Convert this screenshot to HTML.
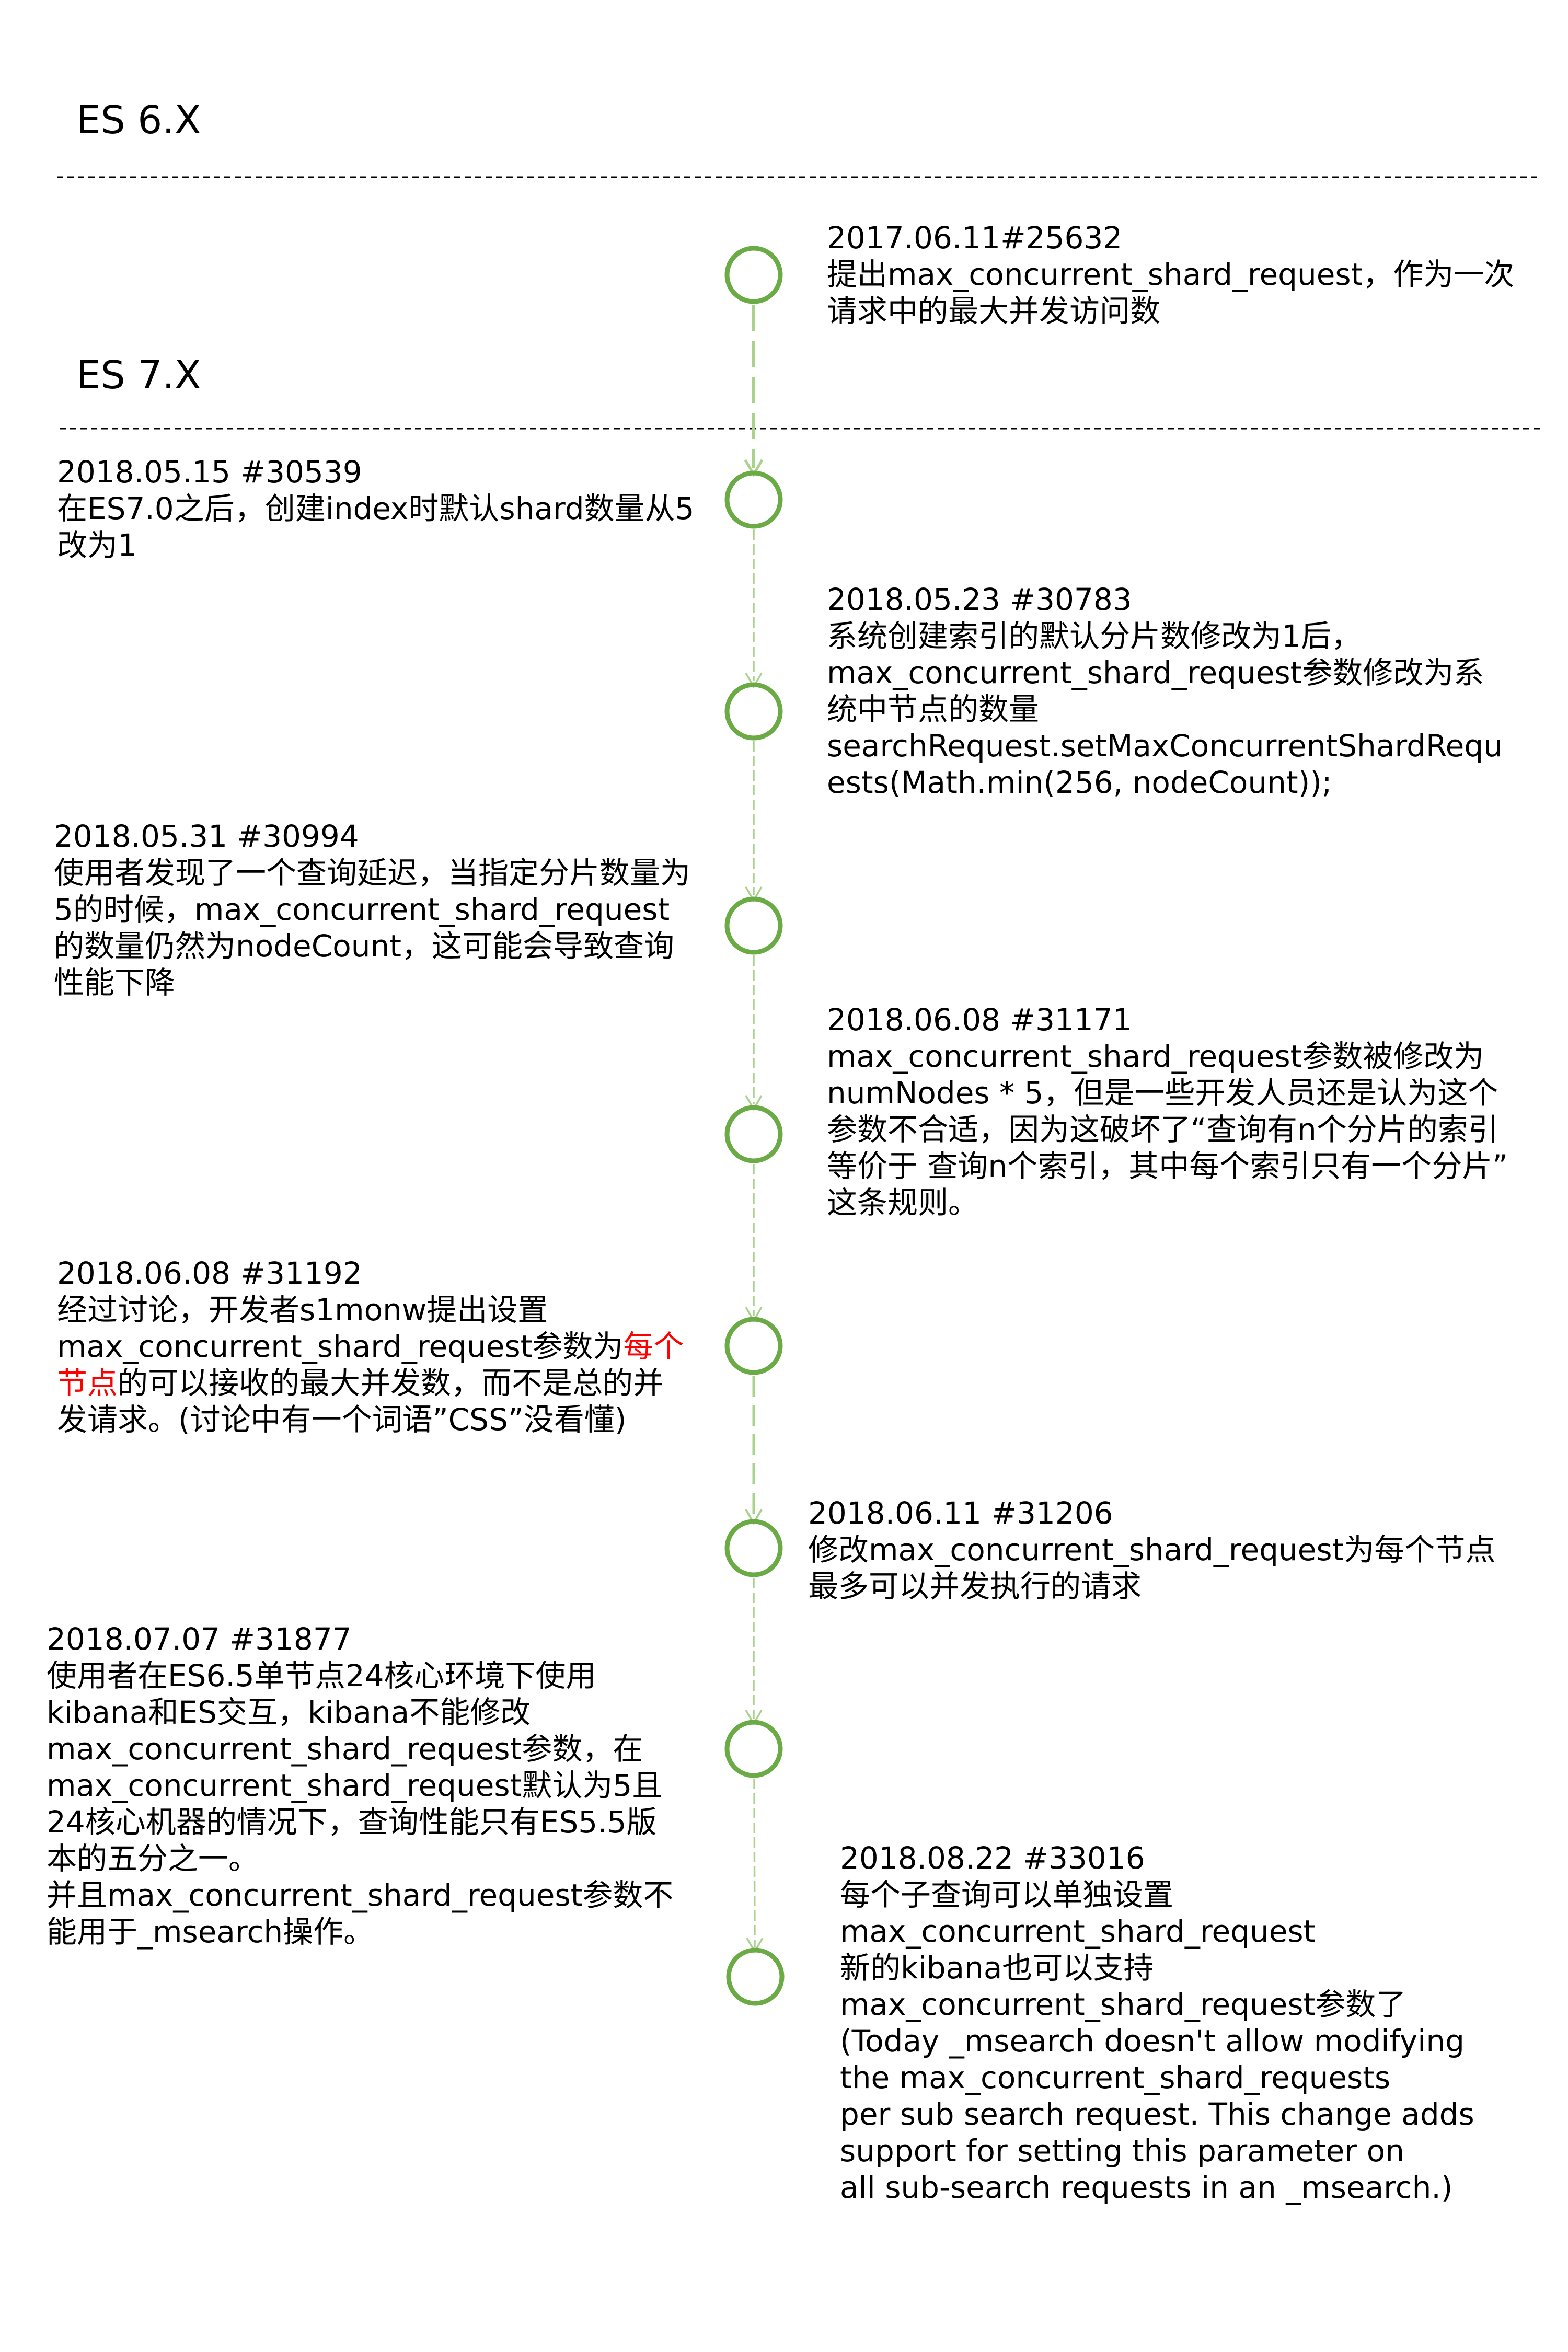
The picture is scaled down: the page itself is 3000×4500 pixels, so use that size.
<!DOCTYPE html>
<html><head><meta charset="utf-8"><style>
html,body{margin:0;padding:0;background:#fff;}
body{width:3000px;height:4500px;position:relative;overflow:hidden;font-family:"DejaVu Sans","Noto Sans CJK SC",sans-serif;color:#000;}
.t{position:absolute;font-size:58px;line-height:70px;white-space:pre;}
.h{position:absolute;font-size:74px;line-height:74px;white-space:pre;}
.r{color:#ff0000;}
svg{position:absolute;left:0;top:0;}
</style></head><body>
<svg width="3000" height="4500">
<line x1="109" y1="339" x2="2942" y2="339" stroke="#000" stroke-width="3" stroke-dasharray="12 8"/>
<line x1="114" y1="820" x2="2952" y2="820" stroke="#000" stroke-width="3" stroke-dasharray="12 8"/>
<g transform="translate(0,3)">
<g stroke="#a9d38c" fill="none">
<line x1="1442" y1="580" x2="1442" y2="893" stroke-width="6" stroke-dasharray="50 19"/>
<polyline points="1426,877 1442,905 1458,877" stroke-width="5"/>
<line x1="1442" y1="1010" x2="1442" y2="1300" stroke-width="3.5" stroke-dasharray="20 8"/>
<polyline points="1427,1285 1442,1311 1457,1285" stroke-width="3.5"/>
<line x1="1442" y1="1415" x2="1442" y2="1710" stroke-width="3.5" stroke-dasharray="20 8"/>
<polyline points="1427,1694 1442,1720 1457,1694" stroke-width="3.5"/>
<line x1="1442" y1="1825" x2="1442" y2="2110" stroke-width="3.5" stroke-dasharray="20 8"/>
<polyline points="1427,2093 1442,2119 1457,2093" stroke-width="3.5"/>
<line x1="1442" y1="2224" x2="1442" y2="2515" stroke-width="3.5" stroke-dasharray="20 8"/>
<polyline points="1427,2498 1442,2524 1457,2498" stroke-width="3.5"/>
<line x1="1442" y1="2629" x2="1442" y2="2902" stroke-width="5" stroke-dasharray="40 16"/>
<polyline points="1427,2885 1442,2911 1457,2885" stroke-width="4"/>
<line x1="1442" y1="3016" x2="1442" y2="3286" stroke-width="3.5" stroke-dasharray="20 8"/>
<polyline points="1427,3269 1442,3295 1457,3269" stroke-width="3.5"/>
<line x1="1443" y1="3400" x2="1444" y2="3722" stroke-width="3.5" stroke-dasharray="20 8"/>
<polyline points="1429,3705 1444,3731 1459,3705" stroke-width="3.5"/>
</g>
<g stroke="#6aab45" stroke-width="9" fill="none">
<circle cx="1442" cy="523" r="51"/>
<circle cx="1442" cy="953" r="51"/>
<circle cx="1442" cy="1358" r="51"/>
<circle cx="1442" cy="1768" r="51"/>
<circle cx="1442" cy="2167" r="51"/>
<circle cx="1442" cy="2572" r="51"/>
<circle cx="1442" cy="2959" r="51"/>
<circle cx="1442" cy="3343" r="51"/>
<circle cx="1445" cy="3779" r="51"/>
</g>
</g>
</svg>
<div class="h" style="left:146px;top:193px;">ES 6.X</div>
<div class="h" style="left:146px;top:681px;">ES 7.X</div>
<div class="t" style="left:1582px;top:420px;">2017.06.11#25632
提出max_concurrent_shard_request，作为一次
请求中的最大并发访问数</div>
<div class="t" style="left:109px;top:868px;">2018.05.15 #30539
在ES7.0之后，创建index时默认shard数量从5
改为1</div>
<div class="t" style="left:1582px;top:1112px;">2018.05.23 #30783
系统创建索引的默认分片数修改为1后，
max_concurrent_shard_request参数修改为系
统中节点的数量
searchRequest.setMaxConcurrentShardRequ
ests(Math.min(256, nodeCount));</div>
<div class="t" style="left:103px;top:1565px;">2018.05.31 #30994
使用者发现了一个查询延迟，当指定分片数量为
5的时候，max_concurrent_shard_request
的数量仍然为nodeCount，这可能会导致查询
性能下降</div>
<div class="t" style="left:1582px;top:1916px;">2018.06.08 #31171
max_concurrent_shard_request参数被修改为
numNodes * 5，但是一些开发人员还是认为这个
参数不合适，因为这破坏了“查询有n个分片的索引
等价于 查询n个索引，其中每个索引只有一个分片”
这条规则。</div>
<div class="t" style="left:109px;top:2401px;">2018.06.08 #31192
经过讨论，开发者s1monw提出设置
max_concurrent_shard_request参数为<span class="r">每个</span>
<span class="r">节点</span>的可以接收的最大并发数，而不是总的并
发请求。(讨论中有一个词语”CSS”没看懂)</div>
<div class="t" style="left:1546px;top:2860px;">2018.06.11 #31206
修改max_concurrent_shard_request为每个节点
最多可以并发执行的请求</div>
<div class="t" style="left:89px;top:3101px;">2018.07.07 #31877
使用者在ES6.5单节点24核心环境下使用
kibana和ES交互，kibana不能修改
max_concurrent_shard_request参数，在
max_concurrent_shard_request默认为5且
24核心机器的情况下，查询性能只有ES5.5版
本的五分之一。
并且max_concurrent_shard_request参数不
能用于_msearch操作。</div>
<div class="t" style="left:1607px;top:3520px;">2018.08.22 #33016
每个子查询可以单独设置
max_concurrent_shard_request
新的kibana也可以支持
max_concurrent_shard_request参数了
(Today _msearch doesn't allow modifying
the max_concurrent_shard_requests
per sub search request. This change adds
support for setting this parameter on
all sub-search requests in an _msearch.)</div>
</body></html>
